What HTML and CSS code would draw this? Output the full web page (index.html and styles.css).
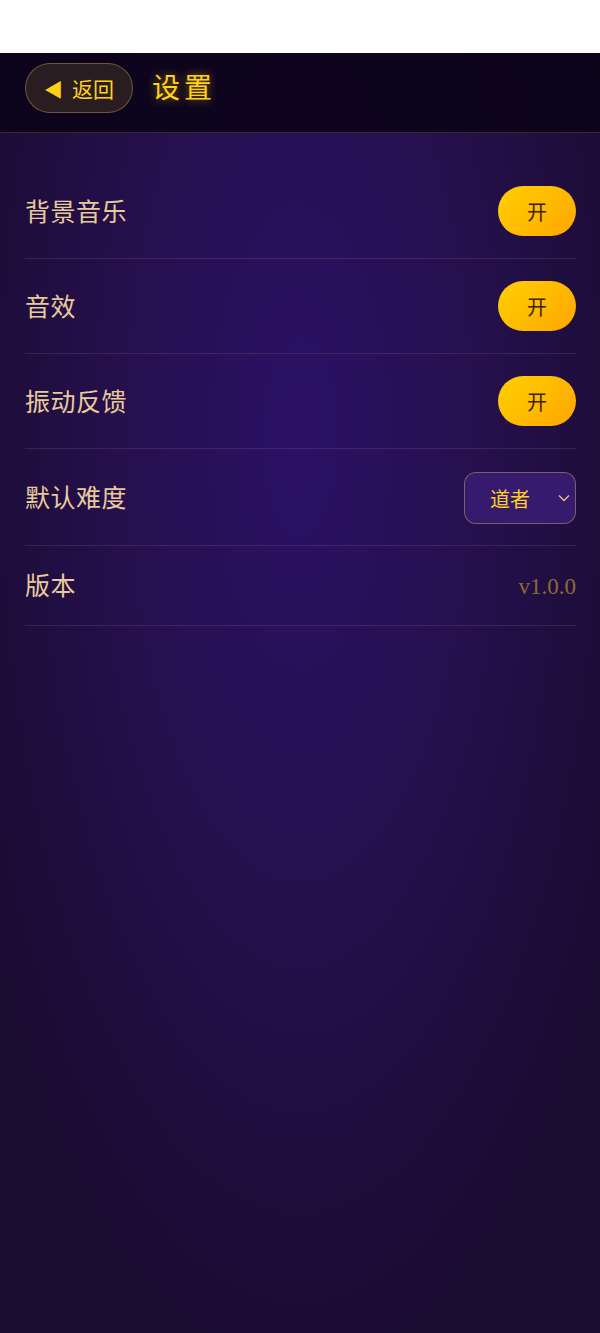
FILE: index.html
```html
<!DOCTYPE html>
<html lang="zh-CN">
<head>
    <meta charset="UTF-8">
    <meta name="viewport" content="width=device-width, initial-scale=1.0">
    <title>设置</title>
    <link rel="stylesheet" href="styles.css">
</head>
<body>
    <div class="top-gap"></div>

    <div class="app">
        <header class="header">
            <button class="back-btn"><span class="back-arrow">◀</span>返回</button>
            <h1 class="title">设置</h1>
        </header>

        <ul class="settings">
            <li class="row">
                <span class="label">背景音乐</span>
                <button class="toggle">开</button>
            </li>
            <li class="row">
                <span class="label">音效</span>
                <button class="toggle">开</button>
            </li>
            <li class="row">
                <span class="label">振动反馈</span>
                <button class="toggle">开</button>
            </li>
            <li class="row">
                <span class="label">默认难度</span>
                <div class="select">
                    <span>道者</span>
                    <svg class="chevron" width="12" height="8" viewBox="0 0 12 8">
                        <path d="M1 1.5 L6 6.5 L11 1.5" fill="none" stroke="#e8c27a" stroke-width="1.4"/>
                    </svg>
                </div>
            </li>
            <li class="row row-info">
                <span class="label">版本</span>
                <span class="version">v1.0.0</span>
            </li>
        </ul>
    </div>
</body>
</html>
```

FILE: styles.css
```css
:root {
    --gold: #ffd21a;
    --label: #e8cb9c;
    --line: rgba(255, 200, 120, 0.12);
}

* { box-sizing: border-box; }

html { background: #ffffff; }

body {
    margin: 0;
    font-family: "Liberation Serif", "Noto Sans CJK SC", serif;
}

.top-gap { height: 53px; background: #ffffff; }

.app {
    min-height: calc(100vh - 53px);
    background: radial-gradient(ellipse 62% 75% at 50% 30%, #2b1065 0%, #26104f 45%, #1a0b30 100%);
}

/* --- header --- */
.header {
    display: flex;
    align-items: flex-start;
    gap: 19px;
    height: 80px;
    padding: 10px 25px 0;
    background: rgba(8, 3, 20, 0.82);
    border-bottom: 1px solid rgba(150, 110, 60, 0.35);
}

.back-btn {
    display: flex;
    align-items: center;
    gap: 9px;
    width: 108px;
    height: 50px;
    padding: 0 0 0 18px;
    font-family: inherit;
    font-size: 21px;
    color: var(--gold);
    background: #2a1d22;
    border: 1px solid rgba(200, 160, 80, 0.45);
    border-radius: 25px;
}
.back-arrow { font-size: 19px; }

.title {
    margin: 0;
    font-size: 28px;
    line-height: 52px;
    font-weight: 400;
    letter-spacing: 4px;
    color: var(--gold);
    text-shadow: 0 0 10px rgba(255, 200, 0, 0.55);
}

/* --- settings list --- */
.settings {
    list-style: none;
    margin: 0;
    padding: 31px 24px 0 25px;
}

.row {
    display: flex;
    justify-content: space-between;
    align-items: center;
    padding: 22px 0;
    border-bottom: 1px solid var(--line);
}
.row-info { padding: 22px 0 23px; }

.label {
    font-size: 25px;
    line-height: 34px;
    letter-spacing: 0.5px;
    color: var(--label);
    transform: translateY(2px);
}

.toggle {
    width: 78px;
    height: 50px;
    font-family: inherit;
    font-size: 20px;
    color: #3a2406;
    background: linear-gradient(135deg, #ffd000 0%, #ffa600 100%);
    border: none;
    border-radius: 25px;
}

.select {
    display: flex;
    align-items: center;
    justify-content: space-between;
    width: 112px;
    height: 52px;
    margin: 1px 0 -1px;
    padding: 0 5px 0 25px;
    font-size: 20px;
    color: var(--gold);
    background: #361a6e;
    border: 1px solid rgba(200, 160, 100, 0.5);
    border-radius: 12px;
}

.version {
    font-size: 23px;
    color: #8c6a3a;
    transform: translateY(2px);
}
```
